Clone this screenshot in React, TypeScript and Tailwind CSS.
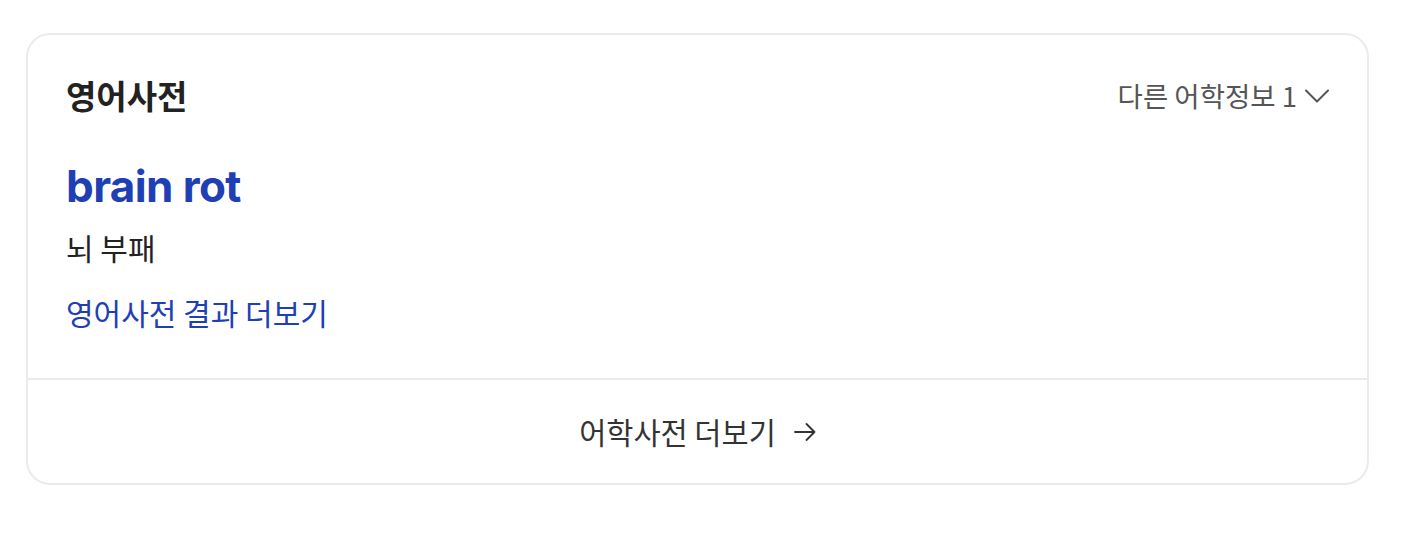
const kr = { fontFamily: '"Noto Sans CJK KR", "Noto Sans", sans-serif' };

const Chevron = () => (
  <svg width="24" height="14" viewBox="0 0 24 14" fill="none" className="ml-[8px] mt-[2px]">
    <path d="M1 1.5 L12 12.5 L23 1.5" stroke="#555" strokeWidth="2" strokeLinecap="round" strokeLinejoin="round" />
  </svg>
);

const Arrow = () => (
  <svg width="22" height="18" viewBox="0 0 22 18" fill="none">
    <path d="M1 9 H20.5 M12.5 1 L20.5 9 L12.5 17" stroke="#333" strokeWidth="1.8" strokeLinecap="round" strokeLinejoin="round" />
  </svg>
);

const DictionaryCard = () => {
  return (
    <div className="w-[1343px] rounded-[24px] border-2 border-[#ebebeb] bg-white">
      <div className="px-[38px] pt-[40px] pb-[48px]">
        <div className="flex items-center justify-between h-[40px]">
          <h2 className="text-[33px] font-bold leading-[40px] text-[#222]" style={kr}>
            영어사전
          </h2>
          <button className="flex items-center text-[27.5px] leading-[40px] text-[#555]" style={kr}>
            다른 어학정보 1
            <Chevron />
          </button>
        </div>
        <a
          href="#"
          className="block mt-[43px] text-[44px] font-bold leading-[56px] text-[#1f40b5] tracking-[-0.6px]"
          style={{ fontFamily: 'Inter, "Noto Sans", sans-serif' }}
        >
          brain rot
        </a>
        <p className="mt-[15px] text-[30px] leading-[36px] text-[#222]" style={kr}>
          뇌 부패
        </p>
        <a href="#" className="block mt-[29px] text-[30px] leading-[36px] text-[#1f40b5]" style={kr}>
          영어사전 결과 더보기
        </a>
      </div>
      <div className="border-t-2 border-[#ebebeb] h-[105px] flex items-center justify-center">
        <a href="#" className="flex items-center gap-[18px] text-[29.5px] text-[#333]" style={kr}>
          어학사전 더보기
          <Arrow />
        </a>
      </div>
    </div>
  );
};

export default function App() {
  return (
    <div className="min-h-[558px] bg-white pt-[33px] pl-[26px]">
      <DictionaryCard />
    </div>
  );
}
